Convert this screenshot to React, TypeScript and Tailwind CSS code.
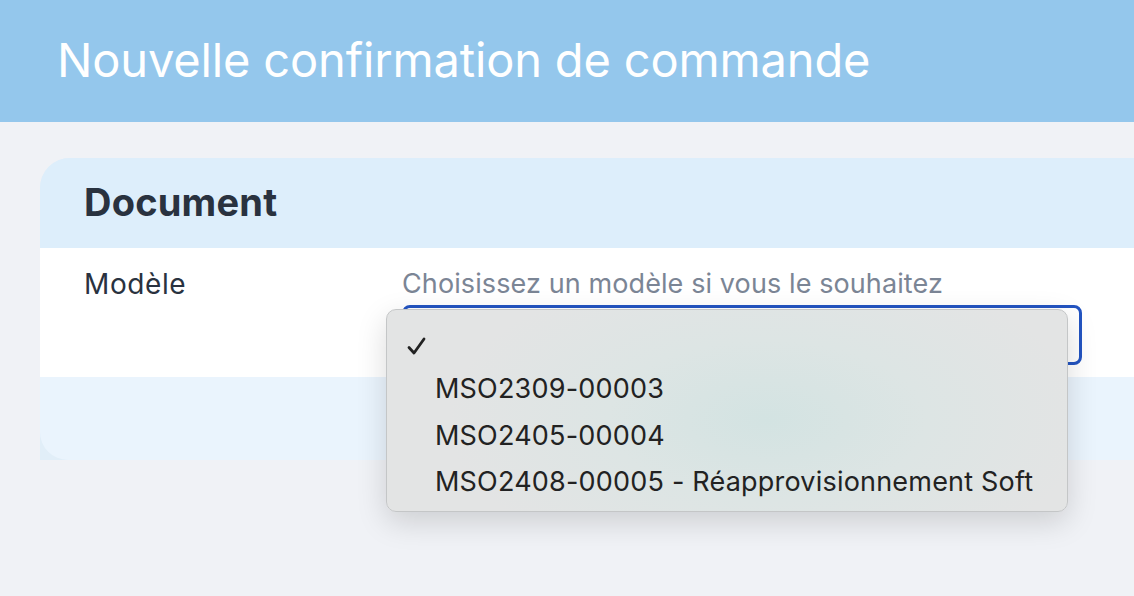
import React from "react";

export default function App() {
  const items = ["MSO2309-00003", "MSO2405-00004", "MSO2408-00005 - Réapprovisionnement Soft"];
  return (
    <div className="relative w-[1134px] h-[596px] overflow-hidden bg-[#f0f2f6]" style={{ fontFamily: "Inter, 'Noto Sans', sans-serif" }}>
      <header className="h-[122px] bg-[#94c7ec] pl-[57px] flex items-center">
        <h1 className="text-[47px] leading-none text-white font-normal tracking-[-0.15px] pb-[3px]">Nouvelle confirmation de commande</h1>
      </header>
      <div className="pt-[36px] pl-[40px]">
        <div className="w-[1120px] rounded-tl-[30px] overflow-hidden bg-[#e1eef8]">
          <div className="h-[90px] bg-[#ddeefb] pl-[44px] flex items-center">
            <h2 className="text-[38px] font-bold text-[#29323f] leading-none pb-[2px] tracking-[0.2px]">Document</h2>
          </div>
          <div className="h-[129px] bg-white flex pl-[44px]">
            <div className="w-[318px] pt-[20px] text-[28px] leading-[32px] text-[#29323f] tracking-[0.6px]">Modèle</div>
            <div className="flex-1 pt-[20px]">
              <div className="text-[27px] leading-[32px] text-[#7b8595] tracking-[0.1px]">Choisissez un modèle si vous le souhaitez</div>
              <div className="mt-[5px] w-[680px] h-[60px] border-[3px] border-[#2354c1] rounded-[8px] bg-white" />
            </div>
          </div>
          <div className="h-[83px] bg-[#eaf4fd] rounded-bl-[28px]" />
        </div>
      </div>
      <div
        className="absolute left-[386px] top-[309px] w-[682px] h-[203px] rounded-[10px] border border-[#c4c6c7] shadow-[0_10px_30px_rgba(0,0,0,0.15)] pt-[15px]"
        style={{ background: "radial-gradient(ellipse 320px 160px at 380px 110px, #d3e3e2 0%, #dde5e4 50%, #e3e4e4 100%)" }}
      >
        <div className="h-[41px] flex items-center pl-[20px]">
          <svg width="20" height="18" viewBox="0 0 20 18" fill="none">
            <path d="M2 10.5 L7 16 L17 2" stroke="#222" strokeWidth="2.8" strokeLinecap="round" strokeLinejoin="round" />
          </svg>
        </div>
        {items.map((t) => (
          <div key={t} className="h-[46.5px] flex items-center pl-[48px] text-[27px] text-[#222] tracking-[0.2px]">
            {t}
          </div>
        ))}
      </div>
    </div>
  );
}
